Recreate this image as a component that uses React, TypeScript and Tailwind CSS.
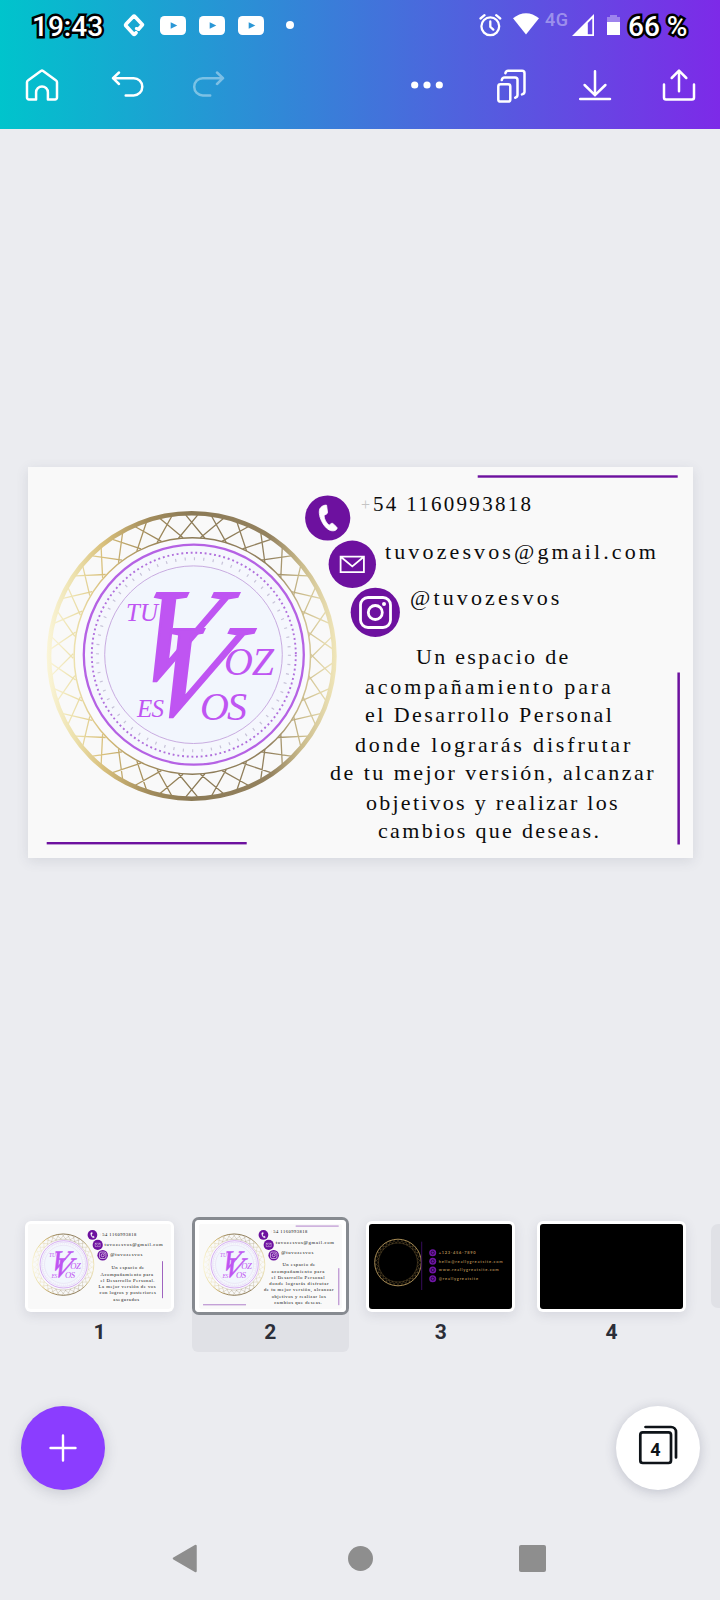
import React from "react";

type Line = { text: string; place: string };

const FRONT_LINES: Line[] = [
  { text: "54 1160993818", place: "left-[345px] top-[26px] text-[21px] leading-[22px] tracking-[2.3px]" },
  { text: "tuvozesvos@gmail.com", place: "left-[357px] top-[74px] text-[22px] leading-[22px] tracking-[3.13px]" },
  { text: "@tuvozesvos", place: "left-[382px] top-[120px] text-[22px] leading-[22px] tracking-[3.13px]" },
  { text: "Un espacio de", place: "left-[388px] top-[179px] text-[22px] leading-[22px] tracking-[2.3px]" },
  { text: "acompañamiento para", place: "left-[337px] top-[209px] text-[22px] leading-[22px] tracking-[2.9px]" },
  { text: "el Desarrollo Personal", place: "left-[337px] top-[237px] text-[22px] leading-[22px] tracking-[2.45px]" },
  { text: "donde lograrás disfrutar", place: "left-[327px] top-[267px] text-[22px] leading-[22px] tracking-[2.83px]" },
  { text: "de tu mejor versión, alcanzar", place: "left-[302px] top-[295px] text-[22px] leading-[22px] tracking-[2.46px]" },
  { text: "objetivos y realizar los", place: "left-[338px] top-[325px] text-[22px] leading-[22px] tracking-[2.25px]" },
  { text: "cambios que deseas.", place: "left-[350px] top-[353px] text-[22px] leading-[22px] tracking-[2.33px]" },
];

const DRAFT_LINES: Line[] = [
  { text: "54 1160993818", place: "left-[345px] top-[38px] text-[21px] leading-[22px] tracking-[2.3px]" },
  { text: "tuvozesvos@gmail.com", place: "left-[356px] top-[86px] text-[22px] leading-[22px] tracking-[3.13px]" },
  { text: "@tuvozesvos", place: "left-[382px] top-[130px] text-[22px] leading-[22px] tracking-[3.13px]" },
  { text: "Un espacio de", place: "left-[388px] top-[192px] text-[22px] leading-[22px] tracking-[2.3px]" },
  { text: "Acompañamiento para", place: "left-[337px] top-[226px] text-[22px] leading-[22px] tracking-[2.5px]" },
  { text: "el Desarrollo Personal.", place: "left-[337px] top-[253px] text-[22px] leading-[22px] tracking-[2.3px]" },
  { text: "La mejor versión de vos", place: "left-[328px] top-[281px] text-[22px] leading-[22px] tracking-[2.4px]" },
  { text: "con logros y posteriores", place: "left-[333px] top-[309px] text-[22px] leading-[22px] tracking-[2.2px]" },
  { text: "asegurados", place: "left-[397px] top-[341px] text-[22px] leading-[22px] tracking-[2.4px]" },
];

const at = (cx: number, cy: number, r: number, deg: number) => {
  const a = ((deg - 90) * Math.PI) / 180;
  return `${(cx + r * Math.cos(a)).toFixed(2)} ${(cy + r * Math.sin(a)).toFixed(2)}`;
};

function lattice(cx: number, cy: number, inner: number, outer: number, count: number) {
  const p = 360 / count;
  let d = "";
  for (let k = 0; k < count; k++) {
    const t = k * p;
    d += `M${at(cx, cy, outer, t - 2.4)}L${at(cx, cy, inner, t + p / 2 + 1.1)}`;
    d += `M${at(cx, cy, outer, t + 2.4)}L${at(cx, cy, inner, t - p / 2 - 1.1)}`;
  }
  return d;
}

function Artwork({ id, final }: { id: string; final: boolean }) {
  const gold = `url(#${id})`;
  const face = { fontFamily: "Liberation Serif, serif", fill: "#bf55f2" } as const;
  const cap = { ...face, fontStyle: "italic" } as const;
  const big = { ...face, fontSize: 131, stroke: "#bf55f2", strokeWidth: 2.4 } as const;
  return (
    <svg className="absolute inset-0" width="665" height="391" viewBox="28 467 665 391">
      <defs>
        <linearGradient id={id} gradientUnits="userSpaceOnUse" x1="46" y1="0" x2="337" y2="0">
          <stop offset="0" stopColor="#fbf6da" />
          <stop offset="0.1" stopColor="#ece0ab" />
          <stop offset="0.2" stopColor="#d8bf7b" />
          <stop offset="0.35" stopColor="#a28c5c" />
          <stop offset="0.5" stopColor="#8b7a56" />
          <stop offset="0.77" stopColor="#94825f" />
          <stop offset="0.88" stopColor="#cbbc8c" />
          <stop offset="1" stopColor="#f1e7bb" />
        </linearGradient>
      </defs>
      <circle cx="191.7" cy="656" r="142.7" fill="none" stroke={gold} strokeWidth="4.6" />
      <path d={lattice(191.7, 656, 118.5, 141, 34)} fill="none" stroke={gold} strokeWidth="1.3" />
      <circle cx="192.3" cy="656" r="118.2" fill="#fafafd" stroke={gold} strokeWidth="1.5" />
      <circle cx="193.8" cy="654.7" r="110" fill="#f5f7fd" stroke="#b562e4" strokeWidth="2.3" />
      <circle cx="193.8" cy="654.7" r="102" fill="none" stroke="#b06fdc" strokeWidth="1.9" strokeDasharray="1.9 2.82" />
      <circle cx="193.4" cy="654.7" r="96" fill="none" stroke="#c7c3d8" strokeWidth="3" strokeDasharray="1.2 8.22" />
      <circle cx="193.5" cy="654.7" r="88.8" fill="#f2f6fd" stroke="#c3a3dc" strokeWidth="0.9" />
      <text transform="matrix(0.9 0 -0.49 1 113.5 679.3)" {...big}>V</text>
      <text transform="matrix(0.9 0 -0.49 1 129.7 714.6)" {...big}>V</text>
      <text x="126" y="621.3" fontSize="25" textLength="32" {...cap}>TU</text>
      <text x="224" y="675" fontSize="40" textLength="50" {...cap}>OZ</text>
      <text x="137" y="717" fontSize="25" textLength="27" {...cap}>ES</text>
      <text x="200" y="720.3" fontSize="40" textLength="47" {...cap}>OS</text>
      <g fill="#6d119f">
        {final && <rect x="477.7" y="475.3" width="200" height="2.4" />}
        {final && <rect x="46.7" y="842" width="200" height="2.4" />}
        {final ? (
          <rect x="677.4" y="672.5" width="2.5" height="172" />
        ) : (
          <rect x="652" y="640" width="3" height="172" />
        )}
        <circle cx="327.7" cy="518" r="22.6" />
        <circle cx="352.3" cy="564.3" r="23.7" />
        <circle cx="375.3" cy="612.3" r="24.6" />
      </g>
      <path
        d="M326.6 505.2c-1.8-.4-4.6.6-6.3 2.8-1.7 2.3-1.3 8 1.4 13.3c2.6 5.3 6.5 9.2 10.4 9.5c2.6.3 4.4-.9 4.900-2.1c.3-.8 0-1.3-.6-1.9l-3.3-3.1c-.7-.6-1.4-.5-2.1 0l-1.900 1.5c-2.8-2.2-5-6.1-5.1-9.8l2.6-1.4c.8-.4 1-1 .9-1.8z"
        fill="#fff"
        stroke="#fff"
        strokeWidth="0.8"
      />
      <path d="M340.6 556.6h23.3v15.5h-23.3zM341 557l11.3 9.4L363.5 557" fill="none" stroke="#fff" strokeWidth="1.8" />
      <g fill="none" stroke="#fff" strokeWidth="2.8">
        <rect x="360.5" y="597.5" width="30" height="30" rx="7.5" />
        <circle cx="375.3" cy="612.5" r="7" />
      </g>
      <circle cx="384" cy="604" r="2" fill="#fff" />
    </svg>
  );
}

function Design({ id, lines, final }: { id: string; lines: Line[]; final: boolean }) {
  return (
    <div className="relative h-[391px] w-[665px] shrink-0 overflow-hidden bg-[#f9f9f9] font-['Liberation_Serif',serif] text-[#0c0c0c]">
      <Artwork id={id} final={final} />
      <span className={`absolute left-[333px] whitespace-pre ${final ? "top-[27px]" : "top-[39px]"} text-[16px] leading-[22px] text-[#c4c4c4]`}>+</span>
      {lines.map((l) => (
        <div key={l.text} className={`absolute whitespace-pre ${l.place}`}>
          {l.text}
        </div>
      ))}
    </div>
  );
}

function DarkDesign() {
  const rows = [
    { y: 28.7, text: "+123-456-7890", w: 37 },
    { y: 37.3, text: "hello@reallygreatsite.com", w: 64 },
    { y: 46, text: "www.reallygreatsite.com", w: 60 },
    { y: 54.7, text: "@reallygreatsite", w: 39.5 },
  ];
  return (
    <svg width="143" height="85" viewBox="0 0 143 85" className="block rounded-[3px] bg-black">
      <circle cx="29" cy="38.5" r="23.3" fill="none" stroke="#a58a55" strokeWidth="1" />
      <path d={lattice(29, 38.5, 19.6, 23, 34)} stroke="#8b7140" strokeWidth="0.35" fill="none" />
      <circle cx="29" cy="38.5" r="19.5" fill="none" stroke="#6b5630" strokeWidth="0.5" />
      <path d="M52.7 17.7V66" stroke="#3c0d63" strokeWidth="0.9" />
      {rows.map((r) => (
        <g key={r.text}>
          <circle cx="63.7" cy={r.y} r="3.5" fill="#6f16a6" />
          <circle cx="63.7" cy={r.y} r="1.6" fill="none" stroke="#250538" strokeWidth="0.9" />
          <text x="69.7" y={r.y + 1.3} fontSize="4" fontWeight="700" fontFamily="Lato, sans-serif" fill="#a8854f" textLength={r.w}>
            {r.text}
          </text>
        </g>
      ))}
    </svg>
  );
}

function Mini({ children }: { children: React.ReactNode }) {
  return (
    <div className="h-[85px] w-[143px] overflow-hidden rounded-[3px] bg-[#f9f9f9]">
      <div className="h-[391px] w-[665px] origin-top-left scale-[0.215]">{children}</div>
    </div>
  );
}

function Thumb({ label, selected, children }: { label: string; selected?: boolean; children: React.ReactNode }) {
  return (
    <div className={`flex h-[135px] w-[157px] shrink-0 flex-col items-center rounded-[6px] ${selected ? "bg-[#e0e1e6]" : ""}`}>
      <div className={`rounded-[7px] border-[3px] ${selected ? "w-full border-[#868a90]" : "mt-px border-transparent"}`}>
        <div className={`bg-white ${selected ? "rounded-[4px] px-[4px] py-[3.5px]" : "rounded-[6px] p-[3px] shadow-[0_3px_12px_rgba(60,64,90,0.13)]"}`}>
          {children}
        </div>
      </div>
      <span className="mt-[5px] font-['Roboto',sans-serif] text-[21px] leading-[24px] font-bold text-[#2b2e38]">{label}</span>
    </div>
  );
}

function Tool({ className = "", children }: { className?: string; children: React.ReactNode }) {
  return (
    <svg
      width="40"
      height="40"
      viewBox="0 0 40 40"
      fill="none"
      stroke="#fff"
      strokeWidth="2.5"
      strokeLinecap="round"
      strokeLinejoin="round"
      className={`shrink-0 ${className}`}
    >
      {children}
    </svg>
  );
}

function YouTube({ className }: { className: string }) {
  return (
    <svg width="26" height="19" viewBox="0 0 26 19" className={`shrink-0 ${className}`}>
      <rect width="26" height="19" rx="4.5" fill="#fff" />
      <path d="M10.7 6.2l6.6 3.3-6.6 3.3z" fill="#2a97d6" />
    </svg>
  );
}

const OUTLINED =
  "font-['Roboto',sans-serif] text-[28px] leading-[32px] font-medium text-white whitespace-pre [-webkit-text-stroke:5px_#000] [paint-order:stroke_fill] [stroke-linejoin:round]";

function StatusBar() {
  return (
    <div className="flex h-[50px] items-center">
      <span className={`ml-[32px] mt-[3px] w-[72px] shrink-0 ${OUTLINED}`}>19:43</span>
      <svg width="22" height="24" viewBox="0 0 22 24" className="ml-[19px] shrink-0" fill="none" stroke="#fff" strokeWidth="3.6" strokeLinejoin="round" strokeLinecap="round">
        <path d="M15.5 16.2l4-4.4-7.7-8.3a1 1 0 0 0-1.5 0L2.9 11.3a1 1 0 0 0 0 1.5l7.5 8.2a1 1 0 0 0 1.5 0l1.2-1.3" />
        <path d="M13.3 15.5l2.5.8" strokeWidth="3" />
      </svg>
      <YouTube className="ml-[15px]" />
      <YouTube className="ml-[13px]" />
      <YouTube className="ml-[13px]" />
      <div className="ml-[22px] size-[8px] shrink-0 rounded-full bg-white" />
      <svg width="23" height="24" viewBox="0 0 23 24" className="ml-[185px] shrink-0" fill="none" stroke="#fff" strokeWidth="2.3" strokeLinecap="round">
        <circle cx="11.3" cy="13.3" r="8.9" />
        <path d="M11.300 8.500v5.300l3 2.800M1.500 5.500l4-3.300M21.200 5.500l-4-3.300" />
      </svg>
      <svg width="26" height="22" viewBox="0 0 26 22" className="ml-[11px] -mt-[2px] shrink-0">
        <path d="M0 5.3C8-1.6 18-1.6 26 5.3L13 21.5z" fill="#fff" />
      </svg>
      <span className="ml-[6px] -mt-[10px] w-[24px] shrink-0 font-['Roboto',sans-serif] text-[18px] leading-[18px] font-medium tracking-[0.5px] text-white/40">4G</span>
      <svg width="22" height="22" viewBox="0 0 22 22" className="ml-[3px] -mt-px shrink-0">
        <path d="M22 0v22H0zM20.3 4.5L15.8 9v11.3h4.5z" fill="#fff" fillRule="evenodd" />
      </svg>
      <svg width="13" height="20" viewBox="0 0 13 20" className="ml-[13px] shrink-0">
        <path d="M3 0h7v2h3v5H0V2h3z" fill="#fff" opacity="0.35" />
        <path d="M0 7h13v13H0z" fill="#fff" />
      </svg>
      <span className={`ml-[8px] mt-[3px] shrink-0 ${OUTLINED}`}>66 %</span>
    </div>
  );
}

function Toolbar() {
  return (
    <div className="flex h-[79px] pt-[15px]">
      <Tool className="ml-[22px]">
        <path d="M6.9 34.5h7.2v-7.200a5.900 5.900 0 0 1 11.8 0v7.200h7.200a1.900 1.900 0 0 0 1.900-1.900V17.200a2 2 0 0 0-.9-1.700L21.100 6a2 2 0 0 0-2.200 0L5.900 15.500a2 2 0 0 0-.9 1.700v15.400a1.900 1.900 0 0 0 1.900 1.900z" />
      </Tool>
      <Tool className="ml-[45px]">
        <path d="M12 7.500L6 13.200l6 5.800M6 13.200h20.700a8.600 8.600 0 0 1 0 17.200h-8" />
      </Tool>
      <Tool className="ml-[41px] opacity-40">
        <path d="M29 7.500l6 5.700-6 5.800M35 13.200h-20.200a8.600 8.600 0 0 0 0 17.200h7.400" />
      </Tool>
      <Tool className="ml-[179px]">
        <g fill="#fff" stroke="none">
          <circle cx="7.7" cy="20" r="3.6" />
          <circle cx="20" cy="20" r="3.6" />
          <circle cx="32.3" cy="20" r="3.6" />
        </g>
      </Tool>
      <Tool className="ml-[44px]">
        <rect x="7.3" y="19.2" width="12" height="17.4" rx="2.2" />
        <path d="M10.800 15c.3-1.800 1.200-2.500 2.800-2.500H24a2.500 2.500 0 0 1 2.500 2.500v15.100c0 1.400-.8 2.200-2.300 2.600M14.400 8.200c.3-1.800 1.200-2.500 2.800-2.500h13.800a2.500 2.500 0 0 1 2.500 2.500v18.600c0 1.400-.8 2.200-2.500 2.600" />
      </Tool>
      <Tool className="ml-[44px]">
        <path d="M20 6.200v24M9.600 20L20 30.200 30.400 20M5.200 33.900h29.800" />
      </Tool>
      <Tool className="ml-[44px]">
        <path d="M20 26.200V5.700M12.700 13L20 5.700l7.300 7.300M5 19.500v13a2 2 0 0 0 2 2h26a2 2 0 0 0 2-2v-13" />
      </Tool>
    </div>
  );
}

export default function App() {
  return (
    <div className="flex h-[1600px] w-[720px] flex-col overflow-hidden bg-[#ebecf0]">
      <header className="h-[129px] shrink-0 bg-linear-to-r/srgb from-[#00c4cc] to-[#7d2ae8]">
        <StatusBar />
        <Toolbar />
      </header>

      <main className="mt-[338px] flex h-[391px] shrink-0 pl-[28px]">
        <div className="shadow-[0_3px_12px_rgba(60,64,90,0.12)]">
          <Design id="gold-main" lines={FRONT_LINES} final />
        </div>
      </main>

      <section className="mt-[359px] flex h-[135px] shrink-0 gap-[13.67px] pl-[21px]">
        <Thumb label="1">
          <Mini>
            <Design id="gold-one" lines={DRAFT_LINES} final={false} />
          </Mini>
        </Thumb>
        <Thumb label="2" selected>
          <Mini>
            <Design id="gold-two" lines={FRONT_LINES} final />
          </Mini>
        </Thumb>
        <Thumb label="3">
          <DarkDesign />
        </Thumb>
        <Thumb label="4">
          <div className="h-[85px] w-[143px] rounded-[3px] bg-black" />
        </Thumb>
        <div className="mt-[7px] ml-[7px] h-[84px] w-[143px] shrink-0 rounded-[7px] bg-[#e0e1e6]" />
      </section>

      <div className="mt-[54px] flex h-[84px] shrink-0 justify-between pr-[20px] pl-[21px]">
        <button className="flex size-[84px] items-center justify-center rounded-full bg-[#8b3dff] shadow-[0_3px_14px_rgba(60,64,90,0.2)]">
          <svg width="28" height="28" viewBox="0 0 28 28" stroke="#fff" strokeWidth="2.4" strokeLinecap="round">
            <path d="M14 1.5v25M1.5 14h25" />
          </svg>
        </button>
        <button className="flex size-[84px] items-center justify-center rounded-full bg-white shadow-[0_2px_12px_rgba(60,64,90,0.24)]">
          <svg width="84" height="84" viewBox="616 1406 84 84" fill="none" stroke="#0e1318" strokeWidth="2.7" strokeLinecap="round">
            <rect x="640.3" y="1432.3" width="30.7" height="30.7" rx="2.5" />
            <path d="M645.5 1427h25.500a5 5 0 0 1 5 5v25.500" />
            <text x="655.5" y="1456" fontSize="18" fontWeight="700" fontFamily="Roboto, sans-serif" textAnchor="middle" fill="#0e1318" stroke="none">
              4
            </text>
          </svg>
        </button>
      </div>

      <nav className="mt-[54px] flex h-[29px] shrink-0 items-center">
        <svg width="25" height="29" viewBox="0 0 25 29" className="ml-[172px]">
          <path d="M2 14.5L23.5 2v25z" fill="#8e8e8e" stroke="#8e8e8e" strokeWidth="2.5" strokeLinejoin="round" />
        </svg>
        <div className="ml-[151px] size-[25px] rounded-full bg-[#8e8e8e]" />
        <div className="ml-[146px] size-[27px] rounded-[2px] bg-[#8e8e8e]" />
      </nav>
    </div>
  );
}
